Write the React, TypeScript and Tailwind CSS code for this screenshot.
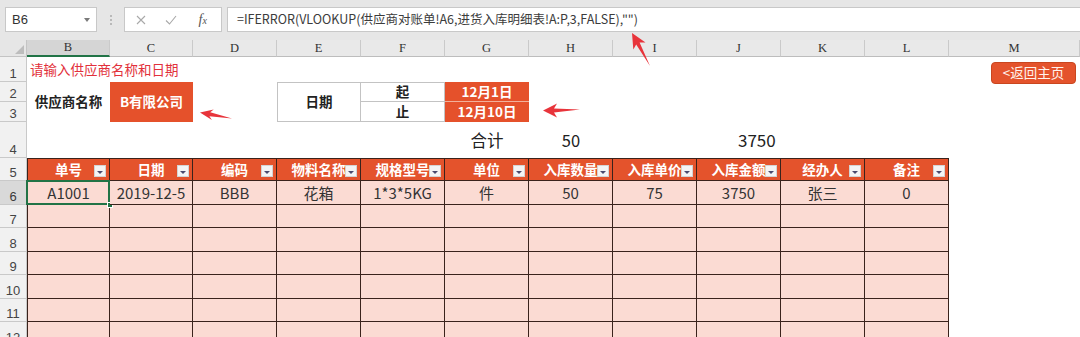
import React from 'react';

const TB = 'border-[#3a231c]';

function Filter() {
  return (
    <span className="absolute right-[3px] bottom-[3px] w-[12px] h-[12px] bg-[#f4f4f4] border border-[#d4d4d4] flex items-center justify-center">
      <span className="mt-[2px] w-0 h-0 border-l-[3px] border-r-[3px] border-t-[3px] border-l-transparent border-r-transparent border-t-[#4a4a6e]" />
    </span>
  );
}

function RowHead({ n, active }: { n: number; active?: boolean }) {
  return (
    <div
      className={
        active
          ? "flex items-end justify-center pb-[1px] text-[13px] leading-none font-['Liberation_Sans',sans-serif] border-r border-b border-[#c9c9c9] bg-[#d9d9d9] text-[#3a3a3a]"
          : "flex items-end justify-center pb-[1px] text-[13px] leading-none font-['Liberation_Sans',sans-serif] border-r border-b border-[#c9c9c9] bg-[#f1f1f1] text-[#444]"
      }
    >
      {n}
    </div>
  );
}

const headers = ['单号', '日期', '编码', '物料名称', '规格型号', '单位', '入库数量', '入库单价', '入库金额', '经办人', '备注'];
const row6 = ['A1001', '2019-12-5', 'BBB', '花箱', '1*3*5KG', '件', '50', '75', '3750', '张三', '0'];
const cols = ['B', 'C', 'D', 'E', 'F', 'G', 'H', 'I', 'J', 'K', 'L', 'M'];

function Empty({ n }: { n: number }) {
  return (
    <>
      {Array.from({ length: n }).map((_, i) => (
        <div key={i} />
      ))}
    </>
  );
}

export default function App() {
  return (
    <div className="relative w-[1080px] h-[337px] overflow-hidden bg-white font-['Noto_Sans_CJK_SC',sans-serif]">
      {/* Toolbar */}
      <div className="h-[40px] bg-[#e6e6e6] flex items-start pt-[7px]">
        <div className="ml-[5px] w-[92px] h-[25px] bg-white border border-[#c8c8c8] flex items-center justify-between pl-[6px] pr-[6px]">
          <span className="text-[13px] leading-none text-[#333] font-['Liberation_Sans',sans-serif]">B6</span>
          <span className="w-0 h-0 border-l-[3px] border-r-[3px] border-t-[4px] border-l-transparent border-r-transparent border-t-[#7a7a7a]" />
        </div>
        <div className="w-[27px] h-[25px] flex flex-col items-center justify-center gap-[2px]">
          <span className="w-[2px] h-[2px] bg-[#b9b9b9]" />
          <span className="w-[2px] h-[2px] bg-[#b9b9b9]" />
          <span className="w-[2px] h-[2px] bg-[#b9b9b9]" />
        </div>
        <div className="w-[98px] h-[25px] bg-white border border-[#c8c8c8] flex items-center">
          <span className="w-[34px] flex justify-center">
            <svg width="10" height="10" viewBox="0 0 10 10">
              <path d="M1 1 L9 9 M9 1 L1 9" stroke="#a9a9a9" strokeWidth="1.1" />
            </svg>
          </span>
          <span className="w-[28px] flex justify-center">
            <svg width="12" height="10" viewBox="0 0 12 10">
              <path d="M1 5.5 L4.5 9 L11 1" stroke="#a9a9a9" strokeWidth="1.1" fill="none" />
            </svg>
          </span>
          <span className="w-[38px] flex justify-center italic font-['Liberation_Serif',serif] text-[14px] leading-none text-[#555]">
            f<span className="text-[10px] mt-[3px]">x</span>
          </span>
        </div>
        <div className="ml-[5px] flex-1 h-[25px] bg-white border border-[#c8c8c8] border-r-0 flex items-center pl-[9px] text-[12.5px] leading-none text-[#3c3c3c] whitespace-nowrap">
          =IFERROR(VLOOKUP(供应商对账单!A6,进货入库明细表!A:P,3,FALSE),"")
        </div>
      </div>

      {/* Sheet */}
      <div className="grid grid-cols-[27px_83px_83px_84px_84px_84px_84px_84px_84px_84px_84px_84px_1fr] grid-rows-[17px_25px_20px_20px_35.5px_repeat(8,23.5px)]">
        {/* column headers */}
        <div className="relative bg-[#e6e6e6] border-r border-b border-[#c4c4c4]">
          <svg className="absolute right-[2px] bottom-[2px]" width="9" height="9" viewBox="0 0 9 9">
            <polygon points="9,0 9,9 0,9" fill="#bdbdbd" />
          </svg>
        </div>
        {cols.map((c) => (
          <div
            key={c}
            className={
              c === 'B'
                ? "flex items-center justify-center text-[12.5px] leading-none font-['Liberation_Serif',serif] text-[#333] border-r border-[#cacaca] bg-[#d5d5d5] border-b-2 border-b-[#217346]"
                : "flex items-center justify-center text-[12.5px] leading-none font-['Liberation_Serif',serif] text-[#333] border-r border-[#cacaca] bg-[#e9e9e9] border-b border-b-[#bdbdbd]"
            }
          >
            {c}
          </div>
        ))}

        {/* row 1 */}
        <RowHead n={1} />
        <div className="flex items-center pl-[3px] whitespace-nowrap text-[13.5px] leading-none text-[#e2313b]">
          请输入供应商名称和日期
        </div>
        <Empty n={11} />

        {/* row 2 */}
        <RowHead n={2} />
        <div className="row-span-2 flex items-center justify-center font-bold text-[13.5px] leading-none text-[#222]">供应商名称</div>
        <div className="row-span-2 flex items-center justify-center font-bold text-[13.5px] leading-none text-white bg-[#e5512b]">B有限公司</div>
        <div />
        <div className="row-span-2 flex items-center justify-center font-bold text-[13.5px] leading-none text-[#222] border border-[#c3c3c3]">日期</div>
        <div className="flex items-center justify-center font-bold text-[13.5px] leading-none text-[#222] border-t border-r border-b border-[#c3c3c3]">起</div>
        <div className="flex items-center justify-center font-bold text-[13.5px] leading-none text-white bg-[#e5512b] border-b border-[#f2b09a]">12月1日</div>
        <Empty n={6} />

        {/* row 3 */}
        <RowHead n={3} />
        <div />
        <div className="flex items-center justify-center font-bold text-[13.5px] leading-none text-[#222] border-r border-b border-[#c3c3c3]">止</div>
        <div className="flex items-center justify-center font-bold text-[13.5px] leading-none text-white bg-[#e5512b]">12月10日</div>
        <Empty n={6} />

        {/* row 4 */}
        <RowHead n={4} />
        <Empty n={5} />
        <div className="flex items-center justify-center text-[16.5px] leading-none text-[#222]">合计</div>
        <div className="flex items-center justify-center text-[16.5px] leading-none text-[#222]">50</div>
        <div />
        <div className="flex items-center pl-[41px] text-[17px] leading-none text-[#222]">3750</div>
        <Empty n={3} />

        {/* row 5 header */}
        <RowHead n={5} />
        {headers.map((h, i) => (
          <div
            key={h}
            className={
              i === 0
                ? `relative flex items-center justify-center bg-[#e4532c] text-white font-bold text-[13.5px] leading-none whitespace-nowrap border-l border-t border-r border-b ${TB}`
                : `relative flex items-center justify-center bg-[#e4532c] text-white font-bold text-[13.5px] leading-none whitespace-nowrap border-t border-r border-b ${TB}`
            }
          >
            {h}
            <Filter />
          </div>
        ))}
        <div />

        {/* row 6 */}
        <RowHead n={6} active />
        {row6.map((v, i) => (
          <div
            key={i}
            className={
              i === 0
                ? `relative flex items-center justify-center bg-[#fbdbd3] text-[#333] text-[15px] leading-none border-l border-r border-b ${TB}`
                : `relative flex items-center justify-center bg-[#fbdbd3] text-[#333] text-[15px] leading-none border-r border-b ${TB}`
            }
          >
            {v}
            {i === 0 && (
              <>
                <div className="absolute -left-[2px] -top-[1px] -right-[1px] -bottom-[1px] border-2 border-[#217346]" />
                <div className="absolute -right-[4px] -bottom-[4px] w-[6px] h-[6px] bg-[#217346] border border-white" />
              </>
            )}
          </div>
        ))}
        <div />

        {/* rows 7-12 */}
        {[7, 8, 9, 10, 11, 12].map((r) => (
          <React.Fragment key={r}>
            <RowHead n={r} />
            {Array.from({ length: 11 }).map((_, i) => (
              <div
                key={i}
                className={
                  i === 0
                    ? `bg-[#fbdbd3] border-l border-r border-b ${TB}`
                    : `bg-[#fbdbd3] border-r border-b ${TB}`
                }
              />
            ))}
            <div />
          </React.Fragment>
        ))}
      </div>

      {/* floating return button */}
      <div className="absolute left-[991px] top-[62px] w-[85px] h-[22px] rounded-[4px] bg-[#e4532c] border border-[#c9461f] flex items-center justify-center text-[13.5px] leading-none text-[#fff3ee]">
        &lt;返回主页
      </div>

      {/* annotation arrows */}
      <svg className="absolute left-0 top-0 pointer-events-none" width="1080" height="337" viewBox="0 0 1080 337">
        <polygon points="200,112.5 213.7,109.5 210.2,112.3 232,118.5 209.4,116.3 211.9,120" fill="#e8343b" />
        <polygon points="543,110.5 557,103.5 554,108.5 580,109.5 554,112.5 557,117.5" fill="#e8343b" />
        <polygon points="632,33 645.5,42.6 639.6,42.4 650,66 636.2,44.4 633.3,49.4" fill="#e8343b" />
      </svg>
    </div>
  );
}
